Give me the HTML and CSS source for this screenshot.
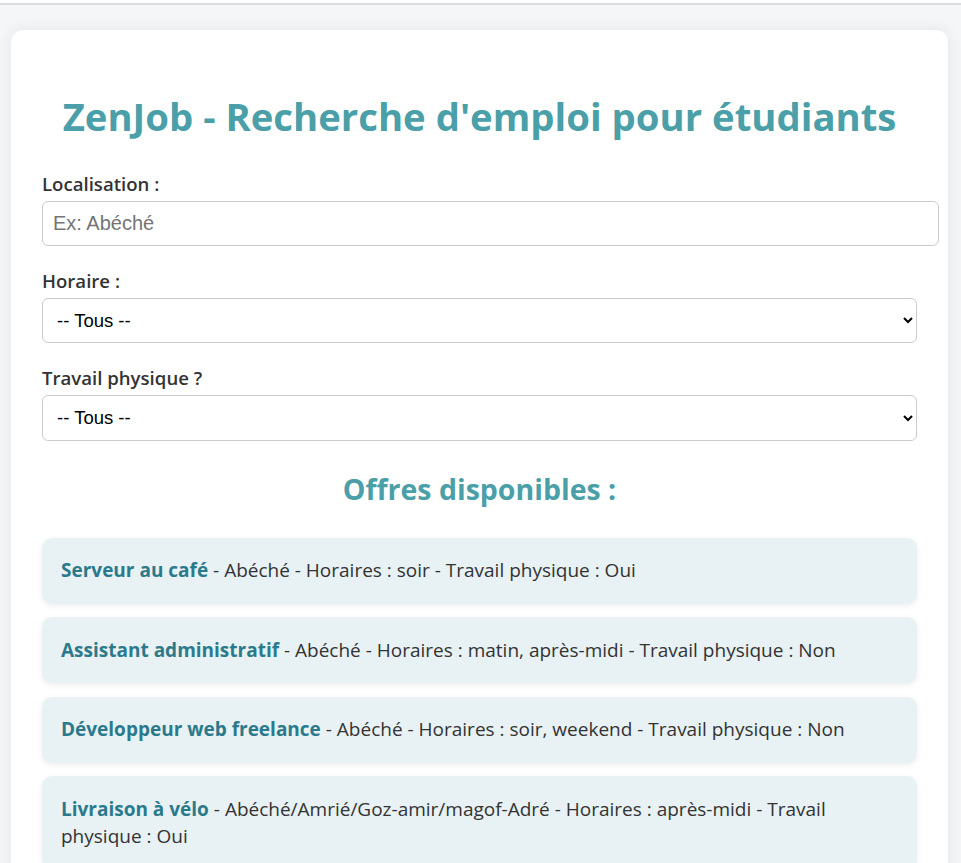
FILE: index.html
```html
<!DOCTYPE html>
<html lang="fr">
<head>
<meta charset="utf-8">
<title>ZenJob</title>
<link rel="stylesheet" href="styles.css">
</head>
<body>
<div class="topbar"></div>
<div class="card">
  <h1>ZenJob - Recherche d'emploi pour étudiants</h1>
  <div class="field">
    <label for="loc">Localisation :</label>
    <input id="loc" type="text" placeholder="Ex: Abéché">
  </div>
  <div class="field">
    <label for="hor">Horaire :</label>
    <select id="hor"><option>-- Tous --</option><option>matin</option><option>après-midi</option><option>soir</option><option>weekend</option></select>
  </div>
  <div class="field">
    <label for="phy">Travail physique ?</label>
    <select id="phy"><option>-- Tous --</option><option>Oui</option><option>Non</option></select>
  </div>
  <h2>Offres disponibles :</h2>
  <ul class="offers">
    <li><strong>Serveur au café</strong> - Abéché - Horaires : soir - Travail physique : Oui</li>
    <li><strong>Assistant administratif</strong> - Abéché - Horaires : matin, après-midi - Travail physique : Non</li>
    <li><strong>Développeur web freelance</strong> - Abéché - Horaires : soir, weekend - Travail physique : Non</li>
    <li><strong>Livraison à vélo</strong> - Abéché/Amrié/Goz-amir/magof-Adré - Horaires : après-midi - Travail physique : Oui</li>
  </ul>
</div>
</body>
</html>
```
FILE: styles.css
```css
html, body {
  margin: 0;
  padding: 0;
}
body {
  background: #f5f6f8;
  font-family: "Open Sans", "Noto Sans", sans-serif;
  color: #333;
  overflow: hidden;
}
.topbar {
  height: 3px;
  background: #fff;
  border-bottom: 2px solid #dcdcdc;
}
.card {
  background: #fff;
  border-radius: 12px;
  padding: 31px;
  margin: 25px 13px 0 11px;
  box-shadow: 0 0 16px rgba(0, 0, 0, 0.08);
}
h1 {
  font-size: 38.3px;
  line-height: 50px;
  color: #4a9fa8;
  text-align: center;
  margin: 30px 0 28.5px;
  font-weight: 700;
}
.field {
  margin-bottom: 21px;
}
label {
  display: block;
  font-weight: 600;
  font-size: 18.6px;
  line-height: 27px;
  margin-bottom: 4px;
  color: #333;
}
input {
  width: 100%;
  box-sizing: content-box;
  height: 23px;
  padding: 10px;
  border: 1px solid #ccc;
  border-radius: 6px;
  font-family: "Liberation Sans", Arial, sans-serif;
  font-size: 20px;
  color: #333;
  margin: 0;
}
input::placeholder {
  color: #757575;
}
select {
  width: 100%;
  height: 45.5px;
  padding: 10px;
  border: 1px solid #ccc;
  border-radius: 6px;
  background: #fff;
  font-family: "Liberation Sans", Arial, sans-serif;
  font-size: 18.5px;
  color: #000;
  margin: 0;
}
h2 {
  font-size: 28.5px;
  line-height: 38px;
  color: #4a9fa8;
  text-align: center;
  margin: 29px 0 30px;
  font-weight: 700;
}
.offers {
  list-style: none;
  margin: 0;
  padding: 0;
}
.offers li {
  background: #e8f1f4;
  border-radius: 10px;
  padding: 19.5px 19px;
  margin-bottom: 13.5px;
  font-size: 19px;
  line-height: 27px;
  box-shadow: 0 2px 6px rgba(0, 0, 0, 0.07);
}
.offers strong {
  color: #2b7a8c;
  font-weight: 700;
}
```
